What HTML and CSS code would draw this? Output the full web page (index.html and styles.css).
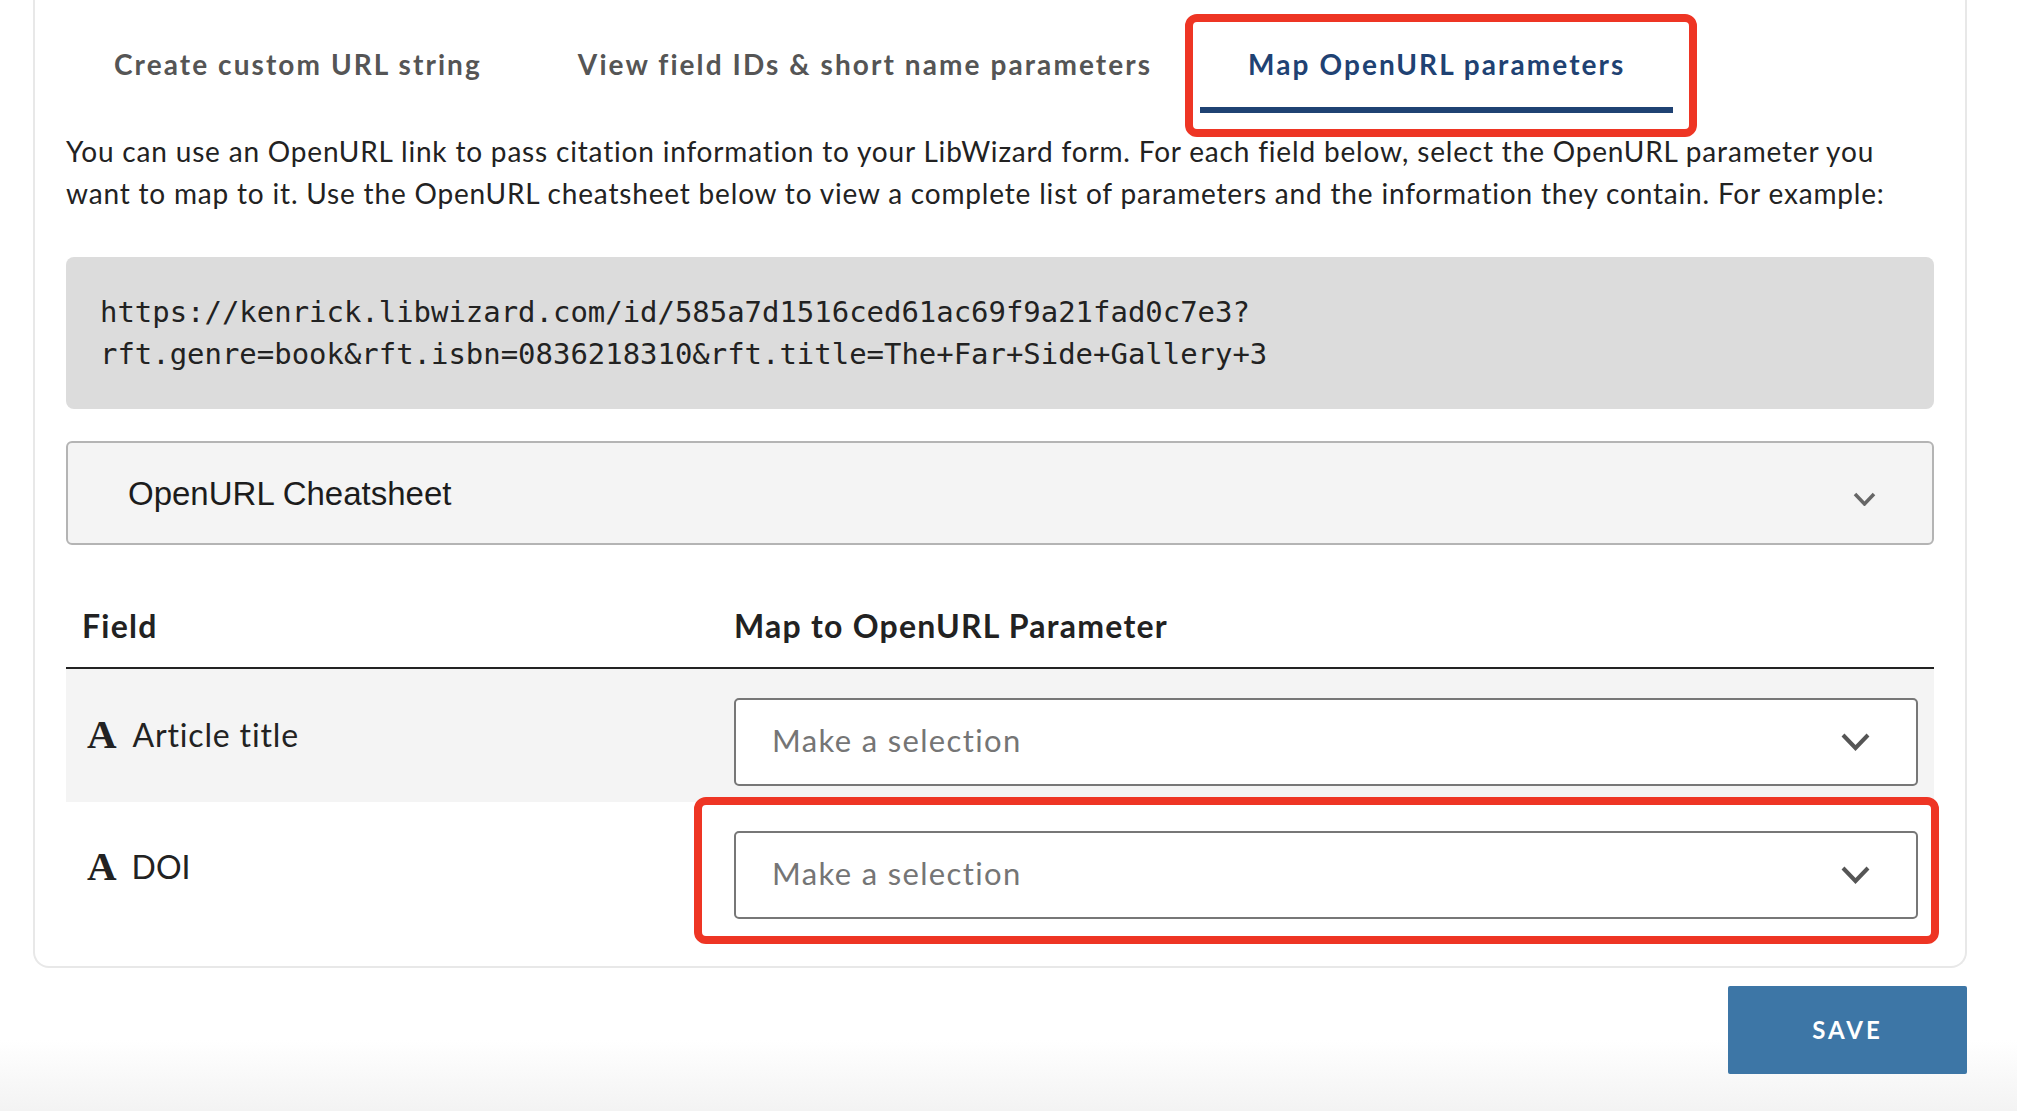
FILE: index.html
```html
<!DOCTYPE html>
<html lang="en">
<head>
<meta charset="utf-8">
<title>Map OpenURL parameters</title>
<link rel="stylesheet" href="styles.css">
</head>
<body>
<main class="page">
  <section class="card">
    <nav class="tabs">
      <div class="tab">Create custom URL string</div>
      <div class="tab">View field IDs &amp; short name parameters</div>
      <div class="tab tab-active">Map OpenURL parameters</div>
    </nav>
    <p class="intro">You can use an OpenURL link to pass citation information to your LibWizard form. For each field below, select the OpenURL parameter you want to map to it. Use the OpenURL cheatsheet below to view a complete list of parameters and the information they contain. For example:</p>
    <pre class="code">https://kenrick.libwizard.com/id/585a7d1516ced61ac69f9a21fad0c7e3?
rft.genre=book&amp;rft.isbn=0836218310&amp;rft.title=The+Far+Side+Gallery+3</pre>
    <div class="accordion">
      <span class="accordion-title">OpenURL Cheatsheet</span>
      <svg class="chev-small" viewBox="0 0 23 14"><path d="M2 2l9.5 10L21 2"/></svg>
    </div>
    <div class="map-head">
      <div class="col-field">Field</div>
      <div class="col-map">Map to OpenURL Parameter</div>
    </div>
    <div class="map-row row-shaded">
      <div class="col-field field-label"><span class="glyph">A</span><span>Article title</span></div>
      <div class="col-map">
        <div class="select"><span>Make a selection</span><svg class="chev" viewBox="0 0 29 18"><path d="M2 2l12.5 13L27 2"/></svg></div>
      </div>
    </div>
    <div class="map-row">
      <div class="col-field field-label label-tight"><span class="glyph">A</span><span>DOI</span></div>
      <div class="col-map">
        <div class="select select-marked"><span>Make a selection</span><svg class="chev" viewBox="0 0 29 18"><path d="M2 2l12.5 13L27 2"/></svg></div>
      </div>
    </div>
  </section>
  <div class="actions"><button class="save" type="button">SAVE</button></div>
</main>
</body>
</html>
```
FILE: styles.css
```css
* { box-sizing: border-box; }
html, body { margin: 0; height: 1111px; overflow: hidden; }
body {
  background: linear-gradient(to bottom, #fff 0, #fff 1040px, #f3f3f3 1111px);
  font-family: "Lato", "Noto Sans", sans-serif;
  color: #222;
}
.page { width: 1934px; margin-left: 33px; }
.card {
  height: 968px;
  padding: 0 31px;
  background: #fff;
  border: 2px solid #e8e8e8;
  border-top: 0;
  border-radius: 0 0 16px 16px;
}
.tabs { display: flex; height: 113px; }
.tab {
  position: relative;
  padding: 45px 48px 0;
  font-size: 28px;
  line-height: 38px;
  font-weight: 700;
  letter-spacing: 2.08px;
  color: #555;
  white-space: nowrap;
}
.tab-active { color: #1f4273; border-bottom: 6px solid #1f4273; }
.tab-active::after {
  content: "";
  position: absolute;
  top: 14px; left: -15px; right: -24px; bottom: -30px;
  border: 8px solid #ee3524;
  border-radius: 12px;
}
.intro {
  margin: 17px 0 43px;
  font-size: 28px;
  line-height: 42px;
  letter-spacing: 0.82px;
}
.code {
  margin: 0 0 32px;
  height: 152px;
  padding: 34px;
  background: #dcdcdc;
  border-radius: 8px;
  font-family: "DejaVu Sans Mono", monospace;
  font-size: 28.95px;
  line-height: 42px;
  color: #222;
}
.accordion {
  display: flex;
  justify-content: space-between;
  align-items: center;
  height: 104px;
  padding: 2px 56px 0 60px;
  background: #f4f4f4;
  border: 2px solid #b4b4b4;
  border-radius: 6px;
}
.accordion-title { font-family: "Liberation Sans", sans-serif; font-size: 33px; color: #1c1c1c; }
.chev-small { width: 23px; height: 14px; margin-top: 10px; fill: none; stroke: #666; stroke-width: 3.5; }
.map-head {
  display: flex;
  align-items: center;
  height: 124px;
  padding-top: 38px;
  border-bottom: 2px solid #222;
  font-size: 32px;
  font-weight: 700;
  letter-spacing: 1.25px;
}
.col-field { width: 668px; padding-left: 16px; flex: none; }
.col-map { flex: 1; padding-right: 16px; }
.map-row { display: flex; height: 132px; padding-top: 29px; }
.row-shaded { background: #f4f4f4; height: 133px; }
.field-label { display: flex; align-items: center; gap: 15px; height: 72px; padding-left: 21px; font-size: 32px; letter-spacing: 0.85px; }
.label-tight { height: 70px; letter-spacing: 0; }
.glyph { font-family: "Liberation Serif", serif; font-weight: 700; font-size: 41px; line-height: 1; color: #222; }
.select {
  position: relative;
  display: flex;
  justify-content: space-between;
  align-items: center;
  height: 88px;
  padding: 0 46px 4px 36px;
  background: #fff;
  border: 2px solid #777;
  border-radius: 5px;
  font-size: 31px;
  color: #757575;
  letter-spacing: 1.35px;
}
.select-marked::after {
  content: "";
  position: absolute;
  top: -36px; left: -42px; right: -23px; bottom: -27px;
  border: 8px solid #ee3524;
  border-radius: 12px;
}
.chev { width: 29px; height: 18px; margin-top: 4px; fill: none; stroke: #555; stroke-width: 4; }
.actions { display: flex; justify-content: flex-end; margin-top: 18px; }
.save {
  width: 239px;
  height: 88px;
  padding: 0 0 1px;
  background: #3d76a6;
  border: 0;
  border-radius: 2px;
  font-family: inherit;
  font-size: 24px;
  font-weight: 700;
  letter-spacing: 3px;
  color: #fff;
}
```
